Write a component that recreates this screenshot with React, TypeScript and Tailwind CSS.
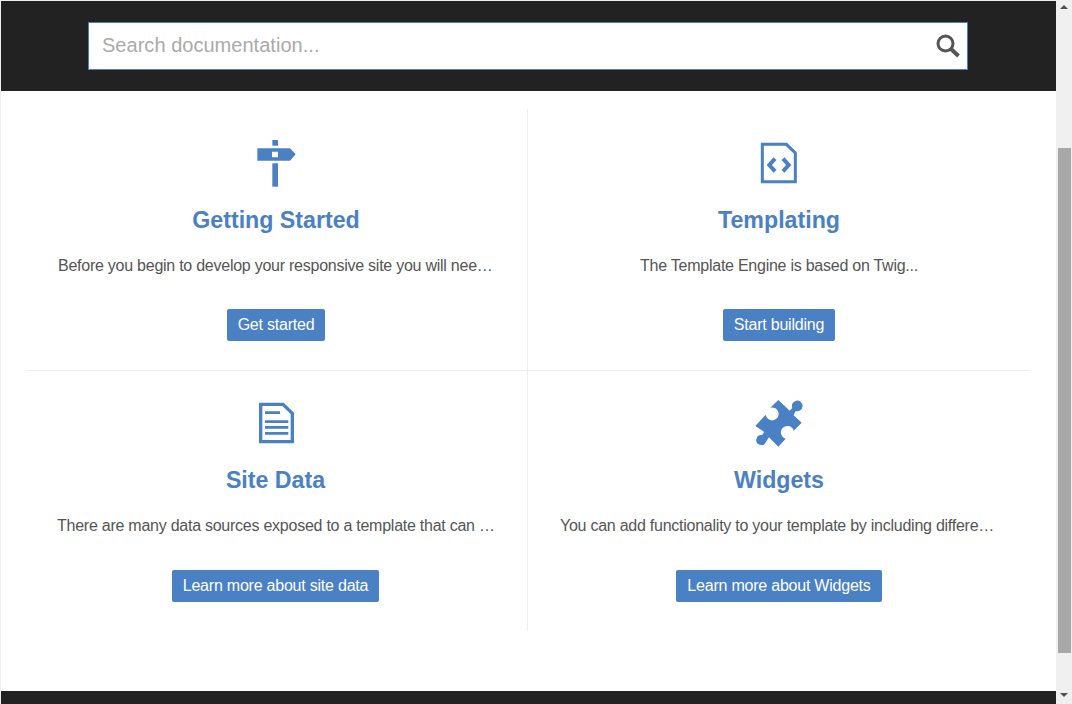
const blue = '#4a80c4'

// Icons are drawn on a 210-unit box (3 units = 1px) so they are 70px squares.
function SignIcon({ vb }: { vb: string }) {
  return (
    <svg viewBox={vb} className="w-[70px] h-[70px]" fill={blue}>
      <rect x="97" y="30" width="17" height="17" />
      <path fillRule="evenodd" d="M52 55H150L167 73L150 92H52ZM96 65V82H114V65Z" />
      <rect x="97" y="100" width="17" height="70" />
    </svg>
  )
}

function CodeIcon({ vb }: { vb: string }) {
  return (
    <svg viewBox={vb} className="w-[70px] h-[70px]" fill="none" stroke={blue} strokeWidth="9">
      <path d="M52 43H124L151 69V155H52Z" />
      <path d="M90 86L73 105L90 124M114 86L131 105L114 124" strokeWidth="12" />
    </svg>
  )
}

function DocIcon({ vb }: { vb: string }) {
  return (
    <svg viewBox={vb} className="w-[70px] h-[70px]" fill="none" stroke={blue} strokeWidth="10">
      <path d="M62 43H129L157 70V155H62Z" />
      <path d="M75 68H120M75 95H145M75 112H145M75 130H145" strokeWidth="8" />
    </svg>
  )
}

function PuzzleIcon({ vb }: { vb: string }) {
  return (
    <svg viewBox={vb} className="w-[70px] h-[70px]" fill={blue}>
      <path d="M100 30L134 62L142 54A16 16 0 1 1 152 63L146 76L170 98L146 122A19.5 19.5 0 1 0 122 146L100 170L72 142L63 155A15 15 0 1 1 51 135L58 126L31 108L62 74A19.5 19.5 0 1 0 76 53Z" />
    </svg>
  )
}

function Card({
  icon,
  title,
  text,
  action,
  className,
  textClass,
  buttonClass,
}: {
  icon: React.ReactNode
  title: string
  text: string
  action: string
  className: string
  textClass: string
  buttonClass: string
}) {
  return (
    <div className={`flex flex-col items-center ${className}`}>
      {icon}
      <h2 className="mt-[3px] text-[23.2px] leading-[34px] font-bold text-[#4a80c4]">{title}</h2>
      <p className={`mt-[17px] truncate self-stretch text-center text-[16px] leading-[23px] tracking-[-0.25px] text-[#555555] ${textClass}`}>{text}</p>
      <a className={`rounded-[2px] bg-[#4a80c4] px-[11px] h-[32px] flex items-center text-[16px] tracking-[-0.22px] text-white ${buttonClass}`}>{action}</a>
    </div>
  )
}

export default function App() {
  return (
    <div className="flex h-[704px] w-[1072px] overflow-hidden bg-white font-['Liberation_Sans',Arial,sans-serif]">
      <div className="flex min-w-0 flex-1 flex-col border-l border-t border-[#eeeeee]">
        <header className="flex h-[90px] shrink-0 items-start justify-center bg-[#222222] pt-[21px] pr-[1px]">
          <div className="flex h-[48px] w-[880px] items-center border border-[#4a80c4] bg-white pl-[13px] pr-[6px]">
            <input
              placeholder="Search documentation..."
              className="min-w-0 flex-1 bg-transparent pb-[2px] text-[20px] tracking-[0.03px] text-[#555555] outline-none placeholder:text-[#aaaaaa]"
            />
            <svg viewBox="0 0 26 26" className="h-[26px] w-[26px]" fill="none" stroke="#555555">
              <circle cx="10.5" cy="10.5" r="7.5" strokeWidth="3" />
              <path d="M16 16L23.5 23" strokeWidth="4" />
            </svg>
          </div>
        </header>
        <main className="flex-1 pt-[18px] pl-[26px] pr-[26px]">
          <div className="grid grid-cols-[501px_502px]">
            <Card
              className="h-[262px] border-b border-r border-[#eeeeee] pt-[21px] pl-[31px] pr-[33px]"
              textClass="-mr-[6px]"
              buttonClass="mt-[32px]"
              icon={<SignIcon vb="3 0 210 210" />}
              title="Getting Started"
              text="Before you begin to develop your responsive site you will need to install a few tools"
              action="Get started"
            />
            <Card
              className="h-[262px] border-b border-[#eeeeee] pt-[21px] px-[32px]"
              textClass=""
              buttonClass="mt-[32px]"
              icon={<CodeIcon vb="-3 0 210 210" />}
              title="Templating"
              text="The Template Engine is based on Twig..."
              action="Start building"
            />
            <Card
              className="h-[260px] border-r border-[#eeeeee] pt-[19px] pl-[30px] pr-[33px]"
              textClass="-mr-[6px]"
              buttonClass="mt-[33px]"
              icon={<DocIcon vb="3 0 210 210" />}
              title="Site Data"
              text="There are many data sources exposed to a template that can be used to render pages"
              action="Learn more about site data"
            />
            <Card
              className="h-[260px] pt-[19px] px-[32px]"
              textClass=""
              buttonClass="mt-[33px]"
              icon={<PuzzleIcon vb="-3 0 210 210" />}
              title="Widgets"
              text="You can add functionality to your template by including different widgets on a page"
              action="Learn more about Widgets"
            />
          </div>
        </main>
        <footer className="h-[13px] shrink-0 bg-[#222222]" />
      </div>
      <div className="flex w-[16px] shrink-0 flex-col items-center bg-[#f0f0f0]">
        <svg viewBox="0 0 8 4" className="mt-[5px] h-[4px] w-[8px]" fill="#505050"><path d="M4 0L8 4H0Z" /></svg>
        <div className="ml-[1px] mt-[139px] h-[505px] w-[13px] bg-[#a8a8a8]" />
        <svg viewBox="0 0 8 4" className="mt-[40px] h-[4px] w-[8px]" fill="#505050"><path d="M0 0H8L4 4Z" /></svg>
      </div>
    </div>
  )
}
